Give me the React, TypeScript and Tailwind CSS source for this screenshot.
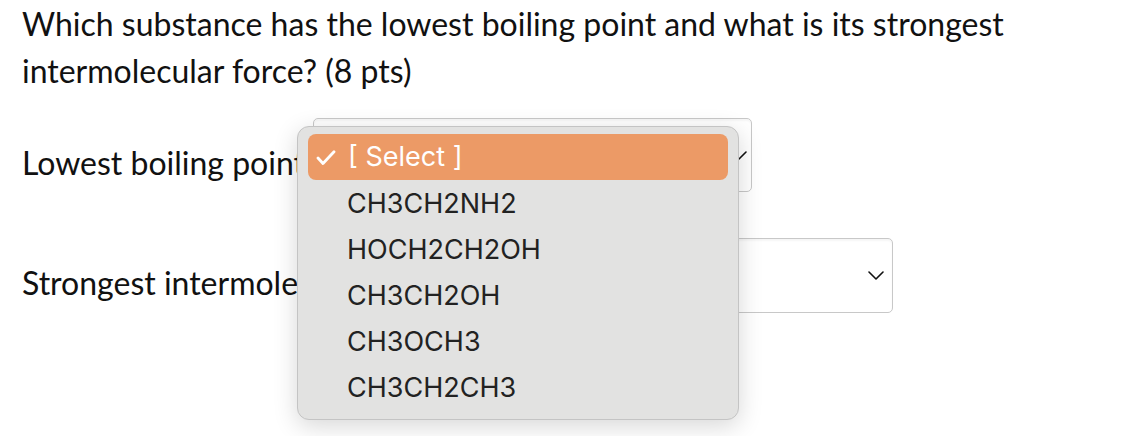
import { FC } from "react";

const options = ["CH3CH2NH2", "HOCH2CH2OH", "CH3CH2OH", "CH3OCH3", "CH3CH2CH3"];

const Chevron: FC<{ className?: string }> = ({ className }) => (
  <svg viewBox="0 0 16 9" className={className} fill="none" stroke="#111" strokeWidth="1.6" strokeLinecap="round" strokeLinejoin="round">
    <path d="M1 1l7 7 7-7" />
  </svg>
);

const App: FC = () => {
  return (
    <div className="relative h-[436px] w-[1126px] overflow-hidden bg-white font-['Lato',sans-serif] text-[#111]">
      <div className="pl-[22px]">
        <p className="text-[32px] leading-[47px]">
          Which substance has the lowest boiling point and what is its strongest
          <br />
          intermolecular force? (8 pts)
        </p>

        <div className="mt-[24px] flex h-[74px] items-center">
          <span className="pt-[15px] text-[32px]">Lowest boiling point</span>
          <div className="ml-[8px] flex h-[74px] w-[439px] items-center justify-end rounded-[5px] border border-[#c8c8c8] bg-white pr-[4px] shadow-[inset_0_2px_2px_rgba(0,0,0,0.04)]">
            <Chevron className="h-[9px] w-[16px]" />
          </div>
        </div>

        <div className="mt-[46px] flex h-[75px] w-[871px] items-center">
          <span className="pt-[15px] text-[32px] whitespace-nowrap">Strongest intermolecular force</span>
          <div className="ml-[13px] flex h-[75px] flex-1 items-center justify-end rounded-[5px] border border-[#c8c8c8] bg-white pr-[8px] shadow-[inset_0_2px_2px_rgba(0,0,0,0.04)]">
            <Chevron className="h-[9px] w-[16px]" />
          </div>
        </div>
      </div>

      {/* open dropdown menu */}
      <div className="absolute left-[297px] top-[126px] flex w-[442px] flex-col rounded-[12px] border border-[#c4c4c4] bg-[#e2e2e1] px-[10px] pb-[9px] pt-[7px] font-['Inter',sans-serif] text-[27px] text-[#222] shadow-[0_6px_24px_rgba(0,0,0,0.16)]">
        <div className="flex h-[46px] items-center rounded-[8px] bg-[#ec9a66] text-white">
          <svg viewBox="0 0 20 15" className="ml-[8px] mr-[12px] h-[15px] w-[20px]" fill="none" stroke="white" strokeWidth="2.8" strokeLinecap="round" strokeLinejoin="round">
            <path d="M2 8l5 5.5L18 1.8" />
          </svg>
          <span>[ Select ]</span>
        </div>
        {options.map((o) => (
          <div key={o} className="flex h-[46px] items-center pl-[39px] pt-[2px]">
            {o}
          </div>
        ))}
      </div>
    </div>
  );
};

export default App;
